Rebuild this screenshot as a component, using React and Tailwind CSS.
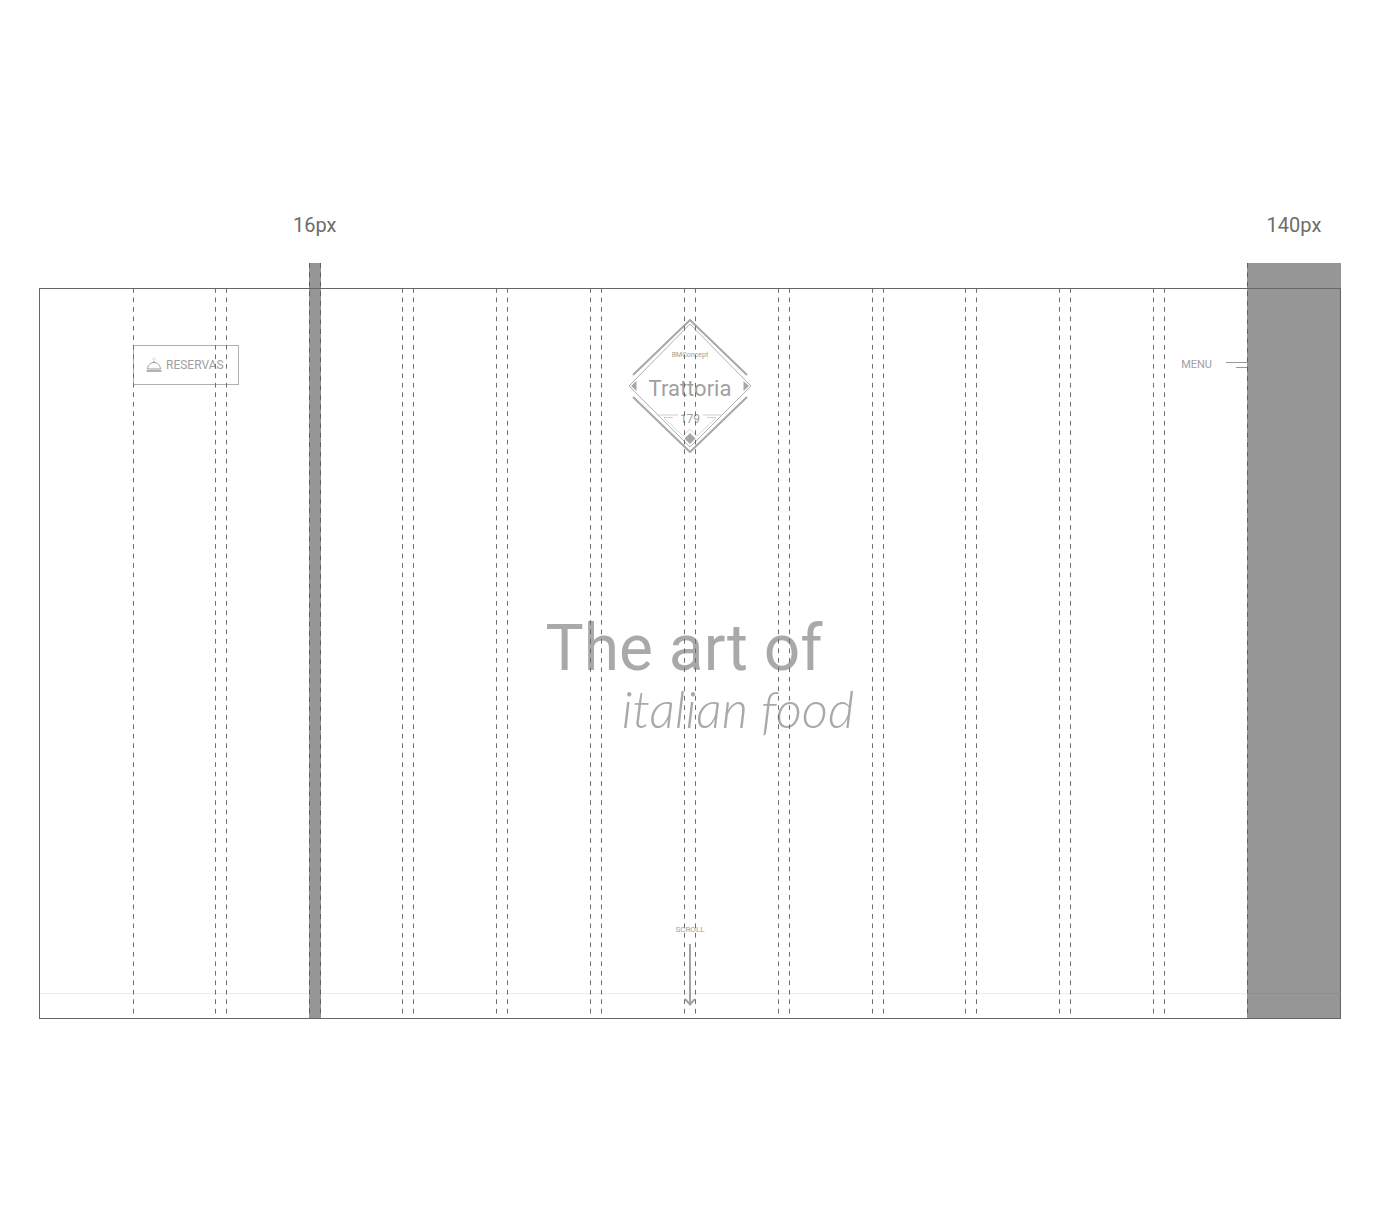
function DashedLine() {
  return (
    <span className="block w-px bg-[linear-gradient(to_bottom,#6e6e6e_50%,transparent_50%)] bg-[length:1px_calc(100%/77)] bg-repeat-y" />
  );
}

function DarkDashedLine() {
  return (
    <span className="block w-px bg-[linear-gradient(to_bottom,#5e5e5e_50%,transparent_50%)] bg-[length:1px_calc(100%/80)] bg-repeat-y" />
  );
}

function Measure({ children }) {
  return (
    <span className="absolute -top-[56px] left-1/2 -translate-x-1/2 text-[20px] leading-[36px] whitespace-nowrap text-[#6c6c6c]">
      {children}
    </span>
  );
}

function Gutter({ label }) {
  if (label) {
    return (
      <div className="relative -mt-[25px] flex w-3 shrink-0 justify-between bg-[#969696]">
        <Measure>{label}</Measure>
        <DarkDashedLine />
        <DarkDashedLine />
      </div>
    );
  }
  return (
    <div className="flex w-3 shrink-0 justify-between">
      <DashedLine />
      <DashedLine />
    </div>
  );
}

function GridOverlay() {
  return (
    <div className="pointer-events-none absolute inset-0 flex">
      <div className="w-[94px] shrink-0" />
      {Array.from({ length: 12 }, (_, i) => (
        <div key={i} className="contents">
          <div className="flex flex-1">{i === 0 && <DashedLine />}</div>
          {i < 11 && <Gutter label={i === 1 ? "16px" : null} />}
        </div>
      ))}
      <div className="relative -mt-[25px] flex w-[94px] shrink-0 bg-[#969696]">
        <Measure>140px</Measure>
        <DarkDashedLine />
      </div>
    </div>
  );
}

function Cloche() {
  return (
    <svg viewBox="0 0 16 16" className="h-4 w-4 shrink-0" fill="none" stroke="#999" aria-hidden="true">
      <path d="M1.500 12C2 8 4.500 5.500 8 5.500S14 8 14.500 12Z" />
      <path d="M.5 14H15.500" strokeWidth="1.500" />
      <path d="M8 5.500V4" />
      <circle cx="8" cy="2" r="1.200" stroke="#ccc" strokeWidth=".6" />
    </svg>
  );
}

function Logo() {
  return (
    <svg
      viewBox="0 0 124 134"
      className="h-[134px] w-[124px]"
      fill="none"
      stroke="#a8a8a8"
      role="img"
      aria-label="BMConcept Trattoria 179"
    >
      <path d="M5 56 62 1 119 56M5 78 62 133 119 78" strokeWidth="2" />
      <path d="M62 5 123 67 62 128 1 67Z" strokeWidth=".9" />
      <path d="M3 67 8.500 62V72ZM121 67 115.500 62V72ZM62 114 67.500 119.500 62 125 56.500 119.500Z" fill="#a8a8a8" stroke="none" />
      <path d="M55 117 62 110 69 117M36 99 55 117M88 99 69 117" stroke="#ccc" strokeWidth=".7" />
      <path d="M30 96H50M36 98.500H45M75 96H94M79 98.500H88" stroke="#bbb" strokeWidth=".7" />
      <g fill="#a0a0a0" stroke="none" textAnchor="middle">
        <text x="62" y="38" className="text-[7px]">BMConcept</text>
        <text x="62" y="77" className="text-[22px]">Trattoria</text>
        <text x="62" y="104" className="text-[12px]">179</text>
      </g>
    </svg>
  );
}

function ScrollArrow() {
  return (
    <svg viewBox="0 0 12 62" className="h-[62px] w-3" fill="none" stroke="#a3a3a3" strokeWidth="2" aria-hidden="true">
      <path d="M6 0V60M1 55 6 60.500 11 55" />
    </svg>
  );
}

export default function App() {
  return (
    <main className="min-h-screen bg-white px-[39px] pt-[288px] pb-[213px] font-[Roboto,sans-serif] text-[#a0a0a0]">
      <section className="relative flex min-h-[731px] flex-col">
        <header className="grid grid-cols-3 items-start px-[94px] pt-[31px]">
          <button className="mt-[26px] flex h-10 w-[106px] items-center gap-1 border border-[#b0b0b0] pl-3 text-[12px]">
            <Cloche />
            RESERVAS
          </button>
          <a href="#top" className="justify-self-center">
            <Logo />
          </a>
          <button className="mt-[36px] flex h-5 items-center gap-[14px] justify-self-end text-[11px] leading-5">
            MENU
            <span className="flex w-[21px] flex-col items-end gap-1">
              <span className="h-px w-full bg-[#999]" />
              <span className="h-px w-[11px] bg-[#999]" />
            </span>
          </button>
        </header>
        <h1 className="mt-[160px] flex flex-col items-center text-[#a9a9a9]">
          <span className="pr-3 text-[64px] leading-[72px]">The art of</span>
          <span className="pl-24 font-[Lato,sans-serif] text-[51px] leading-[48px] font-light italic">italian food</span>
        </h1>
        <div className="absolute inset-x-0 bottom-0 h-[26px] border-t border-[#ececec]" />
        <a href="#next" className="relative mt-auto mb-[13px] flex flex-col items-center gap-1 text-[8px] leading-5">
          SCROLL
          <ScrollArrow />
        </a>
        <GridOverlay />
        <div className="pointer-events-none absolute inset-0 border border-[#666]" />
        <div className="pointer-events-none absolute right-0 bottom-[25px] h-px w-[94px] bg-[#8c8c8c]" />
      </section>
    </main>
  );
}
